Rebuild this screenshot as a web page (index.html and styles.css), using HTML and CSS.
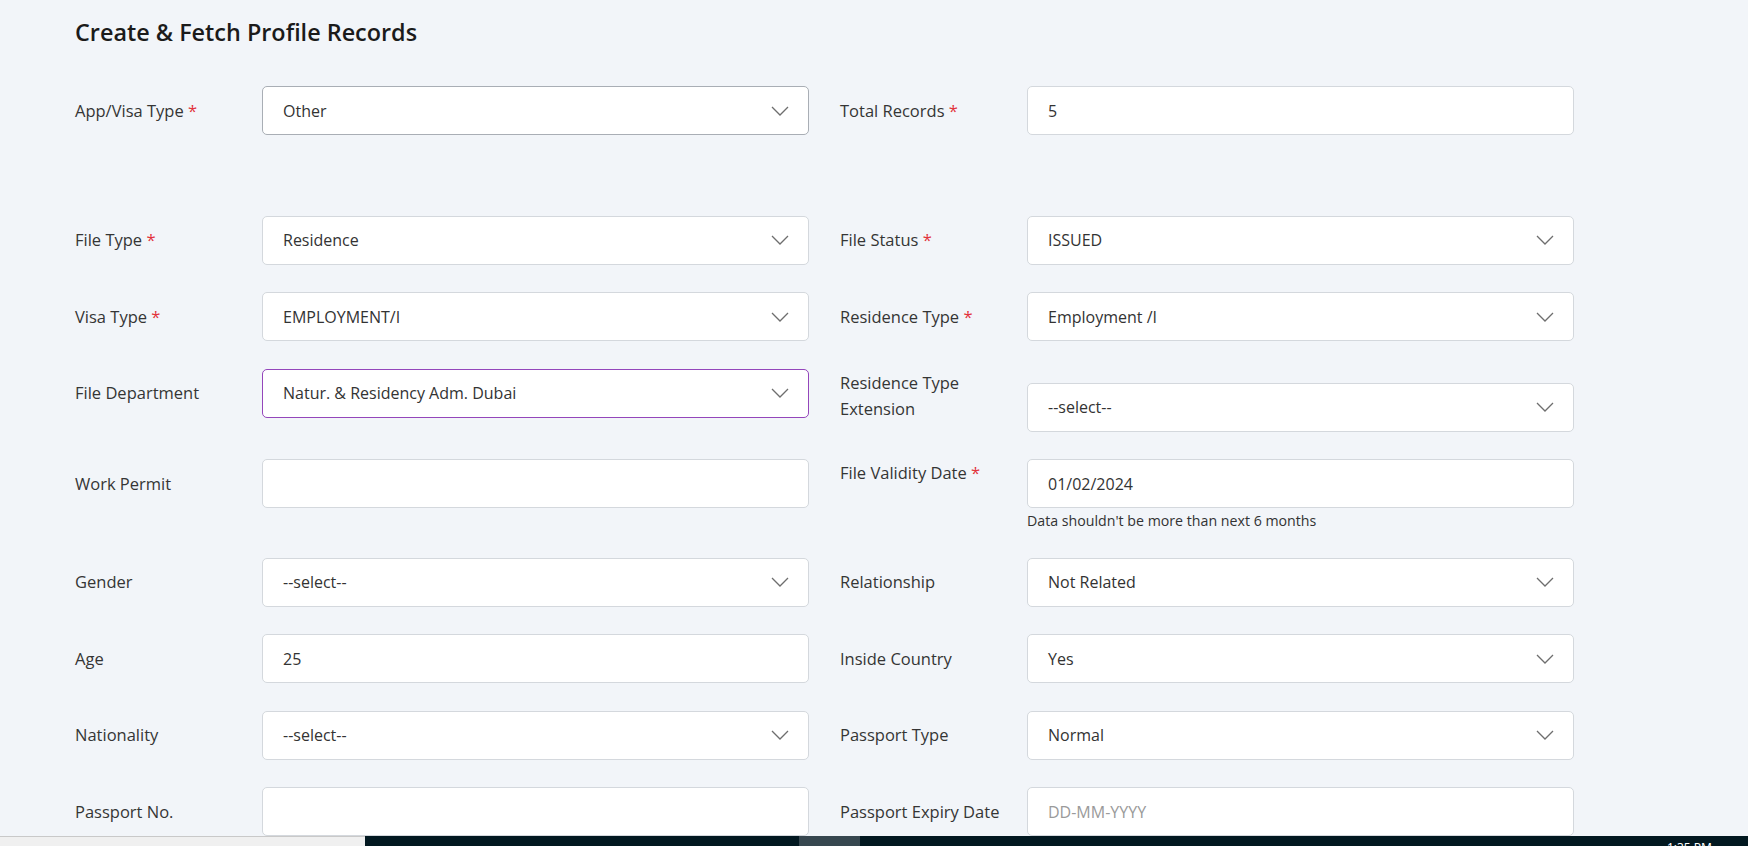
FILE: index.html
```html
<!DOCTYPE html>
<html lang="en">
<head>
<meta charset="utf-8">
<title>Create &amp; Fetch Profile Records</title>
<link rel="stylesheet" href="styles.css">
</head>
<body>
<main class="page">
  <h1 class="title">Create &amp; Fetch Profile Records</h1>
  <div class="form">
    <div class="field field--spaced">
      <label class="label">App/Visa Type <span class="req">*</span></label>
      <div class="control control--dark"><span class="value">Other</span><svg class="chev" width="18" height="10" viewBox="0 0 18 10"><polyline points="1,1 9,9 17,1"/></svg></div>
    </div>
    <div class="field field--spaced">
      <label class="label">Total Records <span class="req">*</span></label>
      <div class="control"><span class="value">5</span></div>
    </div>

    <div class="field">
      <label class="label">File Type <span class="req">*</span></label>
      <div class="control"><span class="value">Residence</span><svg class="chev" width="18" height="10" viewBox="0 0 18 10"><polyline points="1,1 9,9 17,1"/></svg></div>
    </div>
    <div class="field">
      <label class="label">File Status <span class="req">*</span></label>
      <div class="control"><span class="value">ISSUED</span><svg class="chev" width="18" height="10" viewBox="0 0 18 10"><polyline points="1,1 9,9 17,1"/></svg></div>
    </div>

    <div class="field">
      <label class="label">Visa Type <span class="req">*</span></label>
      <div class="control"><span class="value">EMPLOYMENT/I</span><svg class="chev" width="18" height="10" viewBox="0 0 18 10"><polyline points="1,1 9,9 17,1"/></svg></div>
    </div>
    <div class="field">
      <label class="label">Residence Type <span class="req">*</span></label>
      <div class="control"><span class="value">Employment /I</span><svg class="chev" width="18" height="10" viewBox="0 0 18 10"><polyline points="1,1 9,9 17,1"/></svg></div>
    </div>

    <div class="field">
      <label class="label">File Department</label>
      <div class="control control--focus"><span class="value">Natur. &amp; Residency Adm. Dubai</span><svg class="chev" width="18" height="10" viewBox="0 0 18 10"><polyline points="1,1 9,9 17,1"/></svg></div>
    </div>
    <div class="field field--ext">
      <label class="label">Residence Type<br>Extension</label>
      <div class="control"><span class="value">--select--</span><svg class="chev" width="18" height="10" viewBox="0 0 18 10"><polyline points="1,1 9,9 17,1"/></svg></div>
    </div>

    <div class="field">
      <label class="label">Work Permit</label>
      <div class="control"></div>
    </div>
    <div class="field field--top">
      <label class="label">File Validity Date <span class="req">*</span></label>
      <div class="control-wrap">
        <div class="control"><span class="value">01/02/2024</span></div>
        <p class="help">Data shouldn't be more than next 6 months</p>
      </div>
    </div>

    <div class="field">
      <label class="label">Gender</label>
      <div class="control"><span class="value">--select--</span><svg class="chev" width="18" height="10" viewBox="0 0 18 10"><polyline points="1,1 9,9 17,1"/></svg></div>
    </div>
    <div class="field">
      <label class="label">Relationship</label>
      <div class="control"><span class="value">Not Related</span><svg class="chev" width="18" height="10" viewBox="0 0 18 10"><polyline points="1,1 9,9 17,1"/></svg></div>
    </div>

    <div class="field">
      <label class="label">Age</label>
      <div class="control"><span class="value">25</span></div>
    </div>
    <div class="field">
      <label class="label">Inside Country</label>
      <div class="control"><span class="value">Yes</span><svg class="chev" width="18" height="10" viewBox="0 0 18 10"><polyline points="1,1 9,9 17,1"/></svg></div>
    </div>

    <div class="field">
      <label class="label">Nationality</label>
      <div class="control"><span class="value">--select--</span><svg class="chev" width="18" height="10" viewBox="0 0 18 10"><polyline points="1,1 9,9 17,1"/></svg></div>
    </div>
    <div class="field">
      <label class="label">Passport Type</label>
      <div class="control"><span class="value">Normal</span><svg class="chev" width="18" height="10" viewBox="0 0 18 10"><polyline points="1,1 9,9 17,1"/></svg></div>
    </div>

    <div class="field">
      <label class="label">Passport No.</label>
      <div class="control"></div>
    </div>
    <div class="field">
      <label class="label">Passport Expiry Date</label>
      <div class="control"><span class="value placeholder">DD-MM-YYYY</span></div>
    </div>
  </div>
</main>

<div class="taskbar">
  <div class="taskbar__left"></div>
  <div class="taskbar__main">
    <div class="taskbar__app"></div>
    <div class="taskbar__time">1:35 PM</div>
  </div>
</div>
</body>
</html>
```

FILE: styles.css
```css
html, body {
  margin: 0;
  padding: 0;
  height: 100%;
  overflow: hidden;
}

body {
  background: #f2f5f9;
  font-family: "Open Sans", "Noto Sans", "Liberation Sans", sans-serif;
  color: #333;
}

.page {
  padding: 16px 0 0 75px;
}

.title {
  margin: 0 0 38px;
  font-size: 23.4px;
  line-height: 32px;
  font-weight: 600;
  color: #1b1b1b;
}

.form {
  display: grid;
  grid-template-columns: 734px 734px;
  column-gap: 31px;
  row-gap: 27.5px;
  align-items: start;
}

.field {
  display: grid;
  grid-template-columns: 187px 547px;
  align-items: center;
}

.field--spaced {
  margin-bottom: 53px;
}

.field--top {
  align-items: start;
}

.field--top .label {
  padding-top: 1px;
}

.field--ext {
  align-items: start;
}

.field--ext .label {
  padding-top: 1px;
}

.field--ext .control {
  margin-top: 14px;
}

.label {
  font-size: 16.5px;
  line-height: 26px;
  color: #353535;
}

.req {
  color: #e2323b;
}

.control {
  box-sizing: border-box;
  height: 49px;
  background: #fff;
  border: 1px solid #d4d8dd;
  border-radius: 5px;
  display: flex;
  align-items: center;
  justify-content: space-between;
  padding: 0 19px 0 20px;
}

.control--dark {
  border-color: #a9aeb5;
}

.control--focus {
  border-color: #9446bb;
}

.value {
  font-size: 16px;
  color: #333;
}

.placeholder {
  color: #9a9a9a;
}

.chev {
  display: block;
  flex: none;
}

.chev polyline {
  fill: none;
  stroke: #6e6e6e;
  stroke-width: 1.3;
}

.control-wrap {
  display: flex;
  flex-direction: column;
}

.help {
  margin: 3px 0 0;
  font-size: 14.2px;
  line-height: 19px;
  color: #333;
}

.taskbar {
  position: fixed;
  left: 0;
  right: 0;
  bottom: 0;
  height: 10px;
  display: flex;
  overflow: hidden;
}

.taskbar__left {
  width: 365px;
  box-sizing: border-box;
  background: #f0f0f0;
  border-top: 1px solid #c9c9c9;
}

.taskbar__main {
  flex: 1;
  background: #021820;
  display: flex;
  padding-left: 434px;
}

.taskbar__app {
  width: 61px;
  background: #37474f;
}

.taskbar__time {
  margin-left: auto;
  margin-right: 36px;
  padding-top: 4px;
  font-family: "Noto Sans", "Open Sans", sans-serif;
  font-size: 12px;
  line-height: 16px;
  color: #ffffff;
}
```
